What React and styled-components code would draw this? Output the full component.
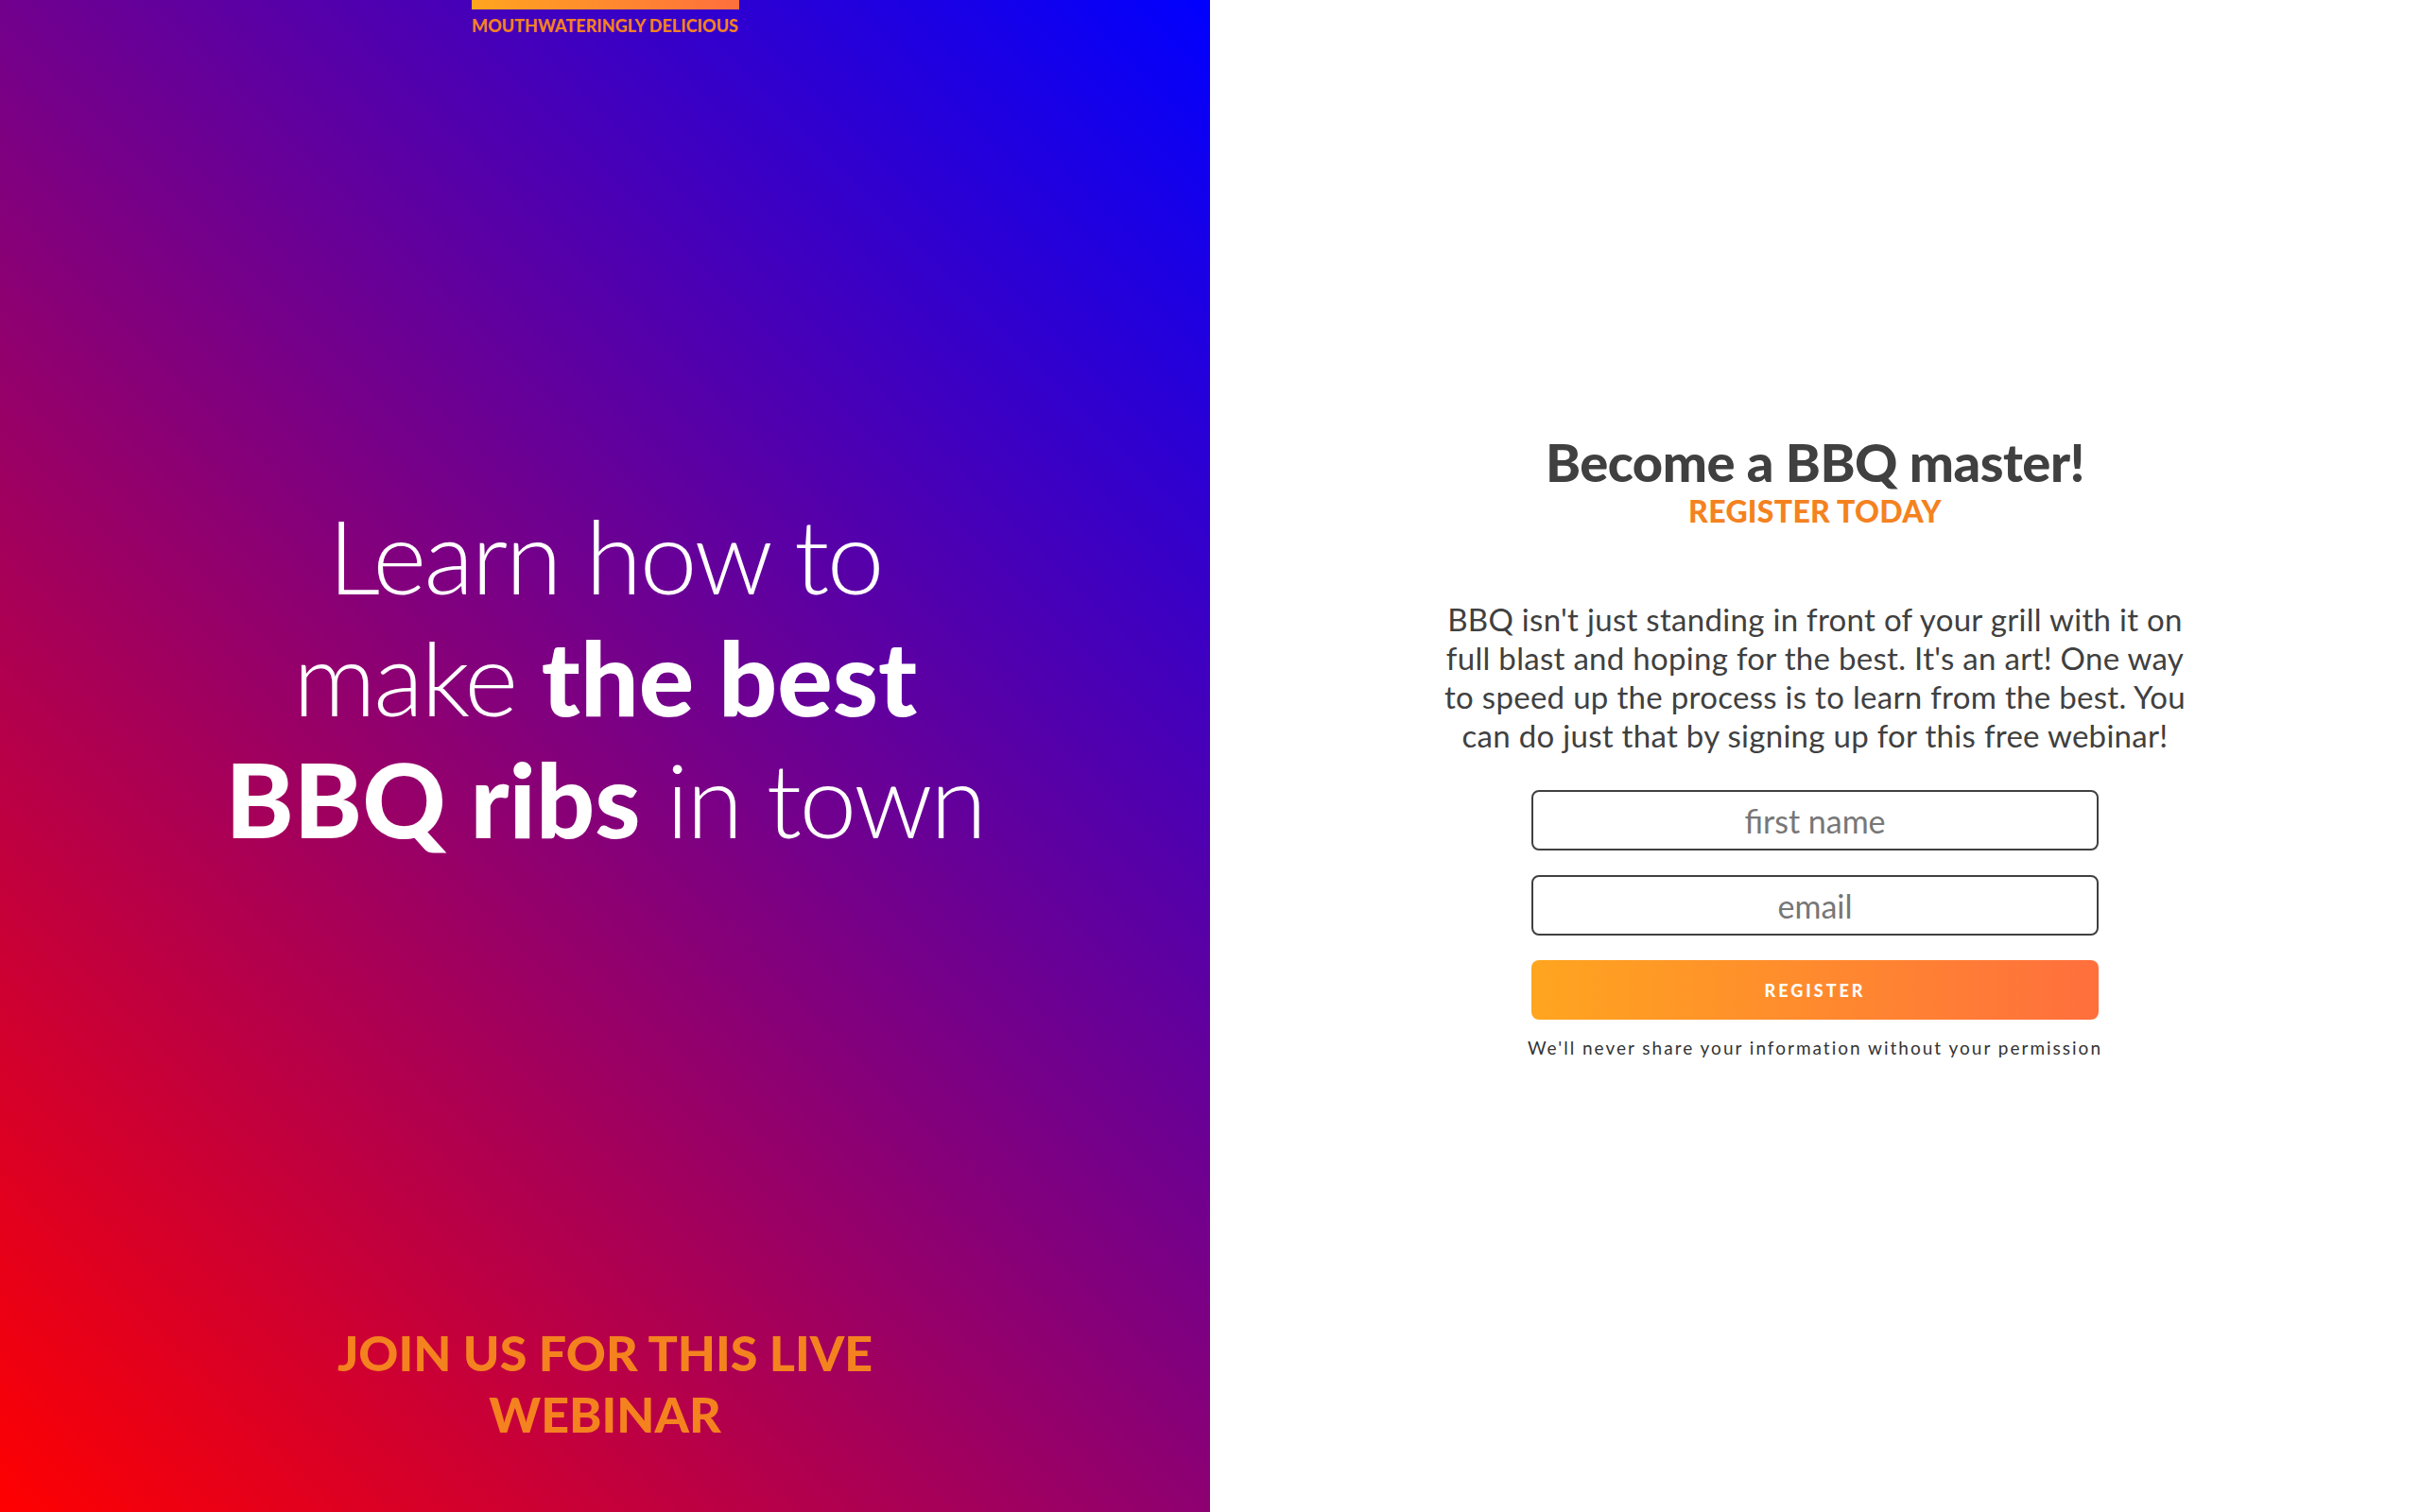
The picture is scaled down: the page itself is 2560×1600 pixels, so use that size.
import React from "react";
import styled, { createGlobalStyle } from "styled-components";

const GlobalStyle = createGlobalStyle`
  html, body { margin: 0; padding: 0; }
  body { font-family: Lato, "Open Sans", sans-serif; }
  * { box-sizing: border-box; }
`;

const Page = styled.div`
  display: grid;
  grid-template-columns: 1280px 1280px;
  width: 2560px;
  height: 1600px;
  overflow: hidden;
`;

const Hero = styled.section`
  display: flex;
  flex-direction: column;
  align-items: center;
  justify-content: space-between;
  background: linear-gradient(45deg, #ff0000, #0000ff);
  padding-bottom: 71px;
`;

const Brand = styled.div`
  display: flex;
  flex-direction: column;
  align-items: center;
  width: 283px;
`;

const BrandBar = styled.div`
  width: 100%;
  height: 10px;
  background: linear-gradient(to right, #ffa51f, #ff6f3d);
`;

const Tagline = styled.div`
  margin-top: 6px;
  font-family: Lato, sans-serif;
  font-weight: 900;
  font-size: 18px;
  line-height: 22px;
  color: #f4821f;
  white-space: nowrap;
`;

const Headline = styled.h1`
  margin: 0 0 6px;
  text-align: center;
  color: #fff;
  font-family: Lato, sans-serif;
  font-weight: 300;
  font-size: 109px;
  line-height: 129px;
  letter-spacing: -2.5px;
`;

const Strong = styled.strong`
  font-weight: 900;
  letter-spacing: 0;
`;

const Join = styled.h2`
  margin: 0;
  width: 620px;
  text-align: center;
  color: #f4821f;
  font-family: Lato, sans-serif;
  font-weight: 900;
  font-size: 52px;
  line-height: 65px;
  letter-spacing: 0;
`;

const FormPanel = styled.section`
  display: flex;
  flex-direction: column;
  align-items: center;
  background: #fff;
  padding-top: 457px;
`;

const Title = styled.h2`
  margin: 0;
  color: #404040;
  font-family: Lato, sans-serif;
  font-weight: 900;
  font-size: 56px;
  line-height: 64px;
  letter-spacing: -0.5px;
`;

const Subtitle = styled.div`
  margin-top: 2px;
  color: #f4821f;
  font-family: Lato, sans-serif;
  font-weight: 900;
  font-size: 32px;
  line-height: 36px;
  letter-spacing: 0.3px;
`;

const Lead = styled.p`
  margin: 76px 0 0;
  text-align: center;
  color: #404040;
  font-family: Lato, sans-serif;
  font-weight: 400;
  font-size: 33px;
  line-height: 41px;
  letter-spacing: 0.3px;
  white-space: nowrap;
`;

const Form = styled.form`
  display: flex;
  flex-direction: column;
  width: 600px;
  margin-top: 37px;
  gap: 26px;
`;

const Field = styled.input`
  width: 100%;
  height: 64px;
  border: 2.5px solid #404040;
  border-radius: 8px;
  background: #fff;
  text-align: center;
  font-family: Lato, sans-serif;
  font-size: 34px;
  color: #404040;
  outline: none;
  &::placeholder { color: #777; }
`;

const Button = styled.button`
  height: 63px;
  border: none;
  border-radius: 8px;
  background: linear-gradient(to right, #ffa51f, #ff6f3d);
  color: #fff;
  font-family: Lato, sans-serif;
  font-weight: 900;
  font-size: 18px;
  letter-spacing: 3px;
  cursor: pointer;
`;

const Note = styled.p`
  margin: 18px 0 0;
  color: #333;
  font-family: Lato, sans-serif;
  font-size: 19px;
  letter-spacing: 2px;
`;

export default function App() {
  return (
    <>
      <GlobalStyle />
      <Page>
        <Hero>
          <Brand>
            <BrandBar />
            <Tagline>MOUTHWATERINGLY DELICIOUS</Tagline>
          </Brand>
          <Headline>
            Learn how to<br />
            make <Strong>the best</Strong><br />
            <Strong>BBQ ribs</Strong> in town
          </Headline>
          <Join>JOIN US FOR THIS LIVE WEBINAR</Join>
        </Hero>
        <FormPanel>
          <Title>Become a BBQ master!</Title>
          <Subtitle>REGISTER TODAY</Subtitle>
          <Lead>
            BBQ isn't just standing in front of your grill with it on<br />
            full blast and hoping for the best. It's an art! One way<br />
            to speed up the process is to learn from the best. You<br />
            can do just that by signing up for this free webinar!
          </Lead>
          <Form onSubmit={(e) => e.preventDefault()}>
            <Field type="text" placeholder="first name" />
            <Field type="email" placeholder="email" />
            <Button type="submit">REGISTER</Button>
          </Form>
          <Note>We'll never share your information without your permission</Note>
        </FormPanel>
      </Page>
    </>
  );
}
